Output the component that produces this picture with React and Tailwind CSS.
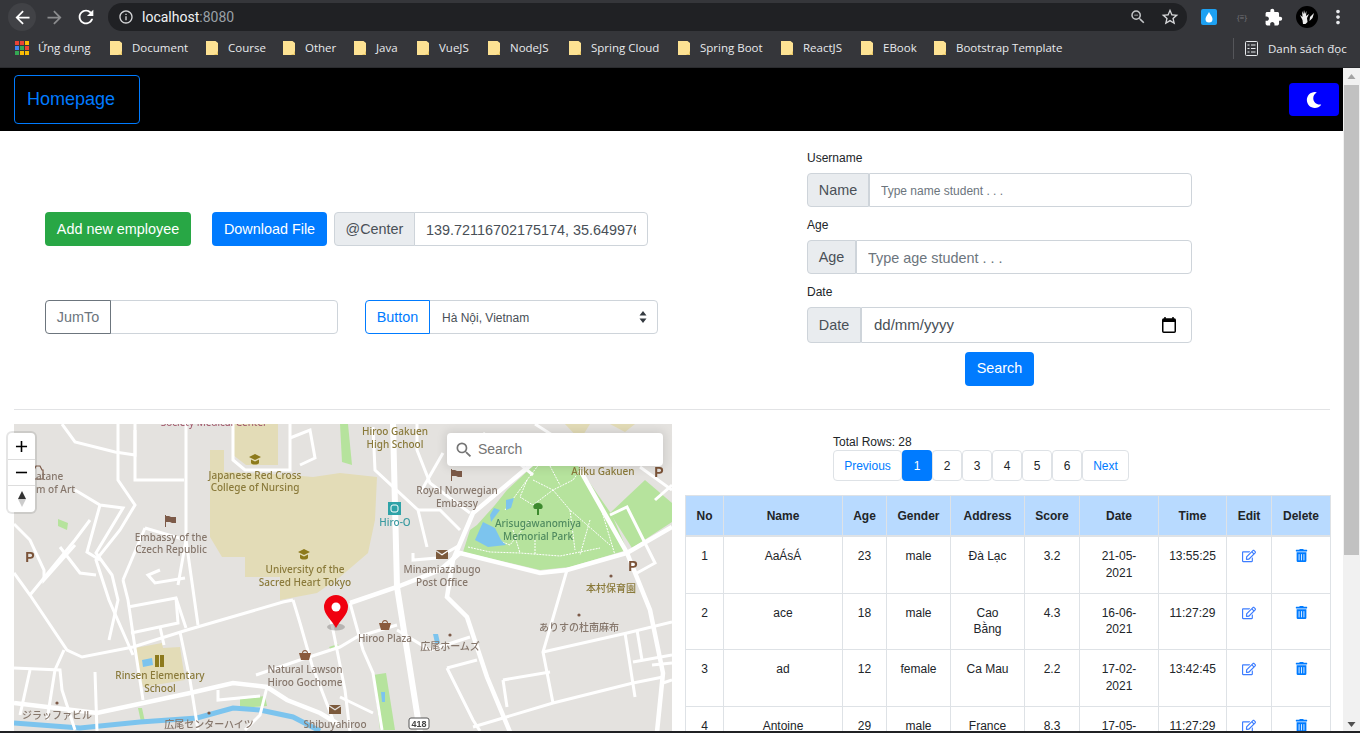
import React from "react";
import { FaMoon, FaRegEdit, FaTrashAlt } from "react-icons/fa";
import { MdArrowBack, MdArrowForward, MdRefresh, MdInfoOutline, MdStarBorder, MdMoreVert, MdSearch, MdZoomOut, MdAdd, MdRemove, MdExtension } from "react-icons/md";

const bookmarks = [
  { t: "Document", w: "w-[56px]" },
  { t: "Course", w: "w-[37px]" },
  { t: "Other", w: "w-[31px]" },
  { t: "Java", w: "w-[23px]" },
  { t: "VueJS", w: "w-[31px]" },
  { t: "NodeJS", w: "w-[41px]" },
  { t: "Spring Cloud", w: "w-[69px]" },
  { t: "Spring Boot", w: "w-[63px]" },
  { t: "ReactJS", w: "w-[40px]" },
  { t: "EBook", w: "w-[33px]" },
  { t: "Bootstrap Template", w: "w-[103px]" },
];

const rows = [
  ["1", "AaÁsÁ", "23", "male", "Đà Lạc", "3.2", "21-05-2021", "13:55:25"],
  ["2", "ace", "18", "male", "Cao Bằng", "4.3", "16-06-2021", "11:27:29"],
  ["3", "ad", "12", "female", "Ca Mau", "2.2", "17-02-2021", "13:42:45"],
  ["4", "Antoine", "29", "male", "France", "8.3", "17-05-2021", "11:27:29"],
];
const heads = ["No", "Name", "Age", "Gender", "Address", "Score", "Date", "Time", "Edit", "Delete"];
const cols = ["w-[38px]", "w-[119px]", "w-[44px]", "w-[64px]", "w-[74px]", "w-[55px]", "w-[79px]", "w-[68px]", "w-[45px]", "w-[59px]"];

function Folder() {
  return (
    <svg width="12" height="14" viewBox="0 0 12 14" className="shrink-0">
      <path d="M0 0h9.500l2.500 2v12H0z" fill="#fde293" />
      <path d="M8.500 13.500h3v-3" fill="none" stroke="#e8c766" strokeWidth="1" />
    </svg>
  );
}

function AppsIcon() {
  return (
    <div className="grid grid-cols-3 gap-[1px] w-[14px] h-[14px] shrink-0">
      <i className="block bg-[#ea4335]" /><i className="block bg-[#ea4335]" /><i className="block bg-[#fbbc04]" />
      <i className="block bg-[#4285f4]" /><i className="block bg-[#34a853]" /><i className="block bg-[#ea4335]" />
      <i className="block bg-[#34a853]" /><i className="block bg-[#fbbc04]" /><i className="block bg-[#fbbc04]" />
    </div>
  );
}

function BrowserChrome() {
  return (
    <div className="h-[68px] shrink-0 bg-[#35363a] text-[#e8eaed] [font-family:'Open_Sans','Noto_Sans',sans-serif]">
      <div className="h-[34px] flex items-center pl-[8px] pr-[10px]">
        <div className="w-[28px] h-[28px] rounded-full bg-[#414246] flex items-center justify-center text-white"><MdArrowBack size={21} /></div>
        <div className="w-[32px] ml-[2px] flex justify-center text-[#8b8c8e]"><MdArrowForward size={21} /></div>
        <div className="w-[32px] flex justify-center text-white"><MdRefresh size={22} /></div>
        <div className="ml-[6px] w-[1079px] h-[28px] rounded-full bg-[#202124] flex items-center pl-[10px] pr-[7px]">
          <MdInfoOutline size={16} className="text-[#d5d6d8]" />
          <span className="ml-[8px] text-[14px] text-[#f1f3f4] [font-family:'Roboto',sans-serif]">localhost<span className="text-[#9aa0a6]">:8080</span></span>
          <MdZoomOut size={18} className="ml-auto text-[#c4c6c8]" />
          <MdStarBorder size={20} className="ml-[13px] text-[#d5d6d8]" />
        </div>
        <div className="ml-[14px] w-[16px] h-[16px] rounded-[2px] bg-[#1da1f2] flex items-center justify-center">
          <svg width="8" height="11" viewBox="0 0 8 11"><path d="M4 0C3 2.500 .5 4.500 .5 7a3.500 3.500 0 0 0 7 0C7.500 4.500 5 2.500 4 0z" fill="#fff" /></svg>
        </div>
        <div className="ml-[17px] w-[16px] text-center text-[8px] text-[#75777a]">{"{≡}"}</div>
        <div className="ml-[14px] text-white"><MdExtension size={19} /></div>
        <div className="ml-[13px] w-[22px] h-[22px] rounded-full bg-black flex items-center justify-center">
          <svg width="16" height="16" viewBox="0 0 16 16"><path d="M3 2l1.500 3L5 1l1 4 1.500-3L7 7l3-2-2 4 .5 4-2 2H4l-.5-4L1 6l2.500 2zM11 8l4-4-1.500 5-3 3z" fill="#eee" /></svg>
        </div>
        <div className="ml-[9px] text-[#e8eaed]"><MdMoreVert size={22} /></div>
      </div>
      <div className="h-[28px] pb-[5px] flex items-center pl-[15px] text-[11.5px] border-b border-[#2a2b2e] box-content">
        <AppsIcon />
        <span className="ml-[9px] w-[53px] whitespace-nowrap">Ứng dụng</span>
        <div className="ml-[19px] flex items-center">
          {bookmarks.map((b) => (
            <div key={b.t} className="flex items-center gap-[10px] mr-[18px]">
              <Folder />
              <span className={b.w + " whitespace-nowrap"}>{b.t}</span>
            </div>
          ))}
        </div>
        <div className="absolute left-[1233px] top-[38px] h-[21px] w-px bg-[#55565a]" />
        <svg width="13" height="15" viewBox="0 0 13 15" className="absolute left-[1245px] top-[41px]" fill="none" stroke="#e8eaed">
          <rect x=".5" y=".5" width="12" height="14" rx="1" />
          <path d="M2.500 4h2M6 4h4.500M2.500 7.500h2M6 7.500h4.500M2.500 11h2M6 11h4.500" />
        </svg>
        <span className="absolute left-[1268px] top-[40px] whitespace-nowrap">Danh sách đọc</span>
      </div>
    </div>
  );
}

const thin = [
  "14,573 30,595 67,650 82,657 133,647 187,630 283,602 293,600",
  "293,600 300,623 312,665 335,725",
  "30,595 75,540 90,520",
  "14,524 30,540 44,570 44,580 75,545",
  "62,424 75,442 115,452 135,455 135,424",
  "118,424 118,480 135,505 120,530 96,560 109,600 133,655",
  "135,430 135,480 184,480",
  "75,490 100,505 123,508 96,553 112,575 118,600 109,640",
  "100,505 87,552 100,560",
  "60,547 80,573 96,575",
  "123,580 128,600 135,648 143,700",
  "128,607 176,598 186,628",
  "131,633 178,623 176,598",
  "160,627 164,645",
  "145,528 186,540 178,585",
  "145,528 123,580",
  "186,424 186,540 198,625",
  "160,570 148,575 155,583 185,578",
  "233,424 233,460 245,470 290,470 290,424",
  "290,438 310,430 315,458 300,465",
  "180,632 190,680 198,730",
  "14,668 60,670 62,690 75,730",
  "30,670 20,715",
  "64,650 55,670 47,720",
  "95,672 97,732",
  "218,690 218,700 260,696",
  "267,687 260,715 245,730",
  "256,675 300,660 340,647 357,637 397,625",
  "330,615 345,690 350,732",
  "350,603 363,650 373,673 382,730",
  "340,697 373,713",
  "373,427 375,470 418,510 427,547",
  "418,510 440,510 460,530",
  "417,424 417,450 430,483 470,513",
  "443,453 420,493",
  "413,553 413,560 437,558 460,545",
  "397,630 430,650 470,637",
  "447,668 477,660",
  "447,668 473,720 480,731",
  "503,680 550,672",
  "503,680 507,707",
  "543,652 627,633 672,622",
  "567,570 543,652 553,703",
  "473,727 553,703 633,683 663,677",
  "625,633 635,697",
  "637,630 642,660",
  "633,662 672,655",
  "663,683 672,680",
  "652,665 672,663",
  "610,515 627,507 655,563 637,573",
  "640,467 672,490",
  "655,500 672,485",
  "483,433 533,475",
  "535,424 560,440",
];
const thick = [
  "14,703 97,713 190,693 233,683 267,687 287,700 320,713 340,725",
  "533,463 473,513 453,560 447,597 467,617 487,677 510,732",
  "580,470 627,553 650,610 663,673 657,732",
  "350,603 397,587 440,570 460,553 540,573 567,570 627,553 672,527",
];
const parkPaths = [
  "477,525 495,505 507,490 533,466 578,466 612,515 627,550 570,567 540,570 463,552 470,530",
  "610,513 645,480 672,503 672,522 632,548",
  "340,424 348,424 352,465 342,462",
];
const parkTrails = [
  "468,547 490,552 520,553 560,556 600,548",
  "505,510 527,480 540,463",
  "533,480 553,490 573,480 580,470",
  "553,490 570,510 610,545",
  "527,480 520,497 533,505 553,490",
  "513,530 520,553",
  "535,540 535,555",
  "570,510 575,550",
  "590,520 580,555",
  "600,505 615,555",
  "497,540 510,545 530,520",
  "550,466 560,485",
];

function Label({ x, y, fill = "#86776c", anchor = "middle", size = 10, children }) {
  return (
    <text x={x} y={y} fill={fill} textAnchor={anchor} fontSize={size} fontWeight="500" className="[font-family:'Noto_Sans','Noto_Sans_CJK_JP',sans-serif]">
      {children}
    </text>
  );
}

function Cap({ x, y }) {
  return <path transform={`translate(${x - 6},${y - 6})`} d="M6 0l6 3-6 3-6-3zM2 5.500l4 2 4-2V9c-1 2-7 2-8 0z" fill="#8d7a1c" />;
}
function Flag({ x, y }) {
  return <path transform={`translate(${x - 5},${y - 6})`} d="M0 0h1v12H0zM1 1h3l2 1h5v6H7L5 7H1z" fill="#7c5a48" />;
}
function Basket({ x, y }) {
  return <path transform={`translate(${x - 6},${y - 6})`} d="M3 4C3 0 9 0 9 4H8C8 1.500 4 1.500 4 4zM0 4h12l-2 7H2z" fill="#8a5a3c" />;
}
function Post({ x, y }) {
  return <path transform={`translate(${x - 6},${y - 5})`} d="M0 0h12L6 4zM0 1.500l6 4 6-4V9H0z" fill="#7c5a3c" />;
}
function P({ x, y }) {
  return <text x={x} y={y} fill="#7b5338" fontSize="14" fontWeight="700" textAnchor="middle" className="[font-family:'Liberation_Sans',sans-serif]">P</text>;
}
function Dot({ x, y }) {
  return <circle cx={x} cy={y} r="1.600" fill="#7c5a48" />;
}

function MapView() {
  return (
    <div className="relative w-[658px] h-[307px] shrink-0 bg-[#e4e2df]">
      <svg viewBox="14 424 658 307" width="658" height="307" className="block absolute left-0 top-0 blur-[0.3px]">
        <polygon points="233,424 278,424 278,465 246,465 233,455" fill="#e3dcb7" />
        <polygon points="210,450 224,450 224,472 290,475 313,477 340,473 377,477 375,520 368,553 340,577 317,593 280,600 280,577 245,577 245,557 222,557 210,537" fill="#e3dcb7" />
        <polygon points="135,648 162,643 163,648 180,647 185,680 143,687" fill="#e3dcb7" />
        <polygon points="565,424 590,424 580,440" fill="#e3dcb7" />
        <polygon points="610,424 635,424 625,432" fill="#e3dcb7" />
        {parkPaths.map((p, i) => <polygon key={i} points={p} fill="#b6e39d" />)}
        <polygon points="373,675 386,673 395,730 380,730" fill="#b6e39d" />
        <polygon points="58,519 68,523 67,530 58,526" fill="#b6e39d" />
        <polygon points="240,699 265,696 267,706 240,708" fill="#b6e39d" />
        <polygon points="138,708 142,708 145,722 141,722" fill="#b6e39d" />
        <polygon points="329,647 338,644 339,648 331,650" fill="#b6e39d" />
        <polygon points="142,660 152,658 153,665 143,667" fill="#7cc4ee" />
        <polygon points="433,634 438,634 440,643 435,643" fill="#7cc4ee" />
        <polygon points="381,692 385,692 385,702 382,702" fill="#7cc4ee" />
        <polyline points="14,723 80,728 140,722 197,718 233,708 260,710 293,717 320,731" fill="none" stroke="#7cc4ee" strokeWidth="5" />
        {parkTrails.map((p, i) => <polyline key={i} points={p} fill="none" stroke="#ffffff" strokeWidth="1" strokeDasharray="2 1" />)}
        <polygon points="483,522 495,528 501,540 506,545 488,547 475,540" fill="#7cc4ee" />
        <polygon points="490,515 494,508 500,510 491,522" fill="#7cc4ee" />
        <polygon points="506,500 514,498 511,508 506,510" fill="#7cc4ee" />
        {thin.map((p, i) => <polyline key={i} points={p} fill="none" stroke="#ffffff" strokeWidth="3" />)}
        {thick.map((p, i) => <polyline key={i} points={p} fill="none" stroke="#ffffff" strokeWidth="4.500" />)}
        <polyline points="393,424 397,587 420,732" fill="none" stroke="#ffffff" strokeWidth="6" />

        <text x="214" y="426" fill="#a05468" fontSize="10" textAnchor="middle" className="[font-family:'Noto_Sans',sans-serif]">Society Medical Center</text>
        <Cap x={255} y={460} /><Cap x={304} y={555} />
        <Flag x={170} y={521} /><Flag x={456} y={475} />
        <Basket x={305} y={655} /><Basket x={385} y={625} />
        <Post x={442} y={555} /><Post x={335} y={710} />
        <P x={30} y={562} /><P x={659} y={477} /><P x={633} y={571} />
        <Dot x={57} y={703} /><Dot x={209} y={713} /><Dot x={450} y={635} /><Dot x={611} y={576} /><Dot x={579} y={615} />
        <path d="M34 470l2-4h4l2 4h1v9H33v-9z" fill="none" stroke="#7c5a48" strokeWidth="1.200" />
        <rect x="155" y="655" width="4" height="12" fill="#8d7a1c" /><rect x="160" y="655" width="4" height="12" fill="#8d7a1c" />
        <rect x="388" y="502" width="13" height="13" fill="#2fa3a8" />
        <rect x="391" y="505" width="7" height="7" rx="2" fill="none" stroke="#fff" />
        <path d="M538 503c-5 0-6 5-3 6h2v6h2v-6h2c3-1 2-6-3-6z" fill="#3d8a2e" />
        <rect x="409" y="718" width="20" height="11" rx="2" fill="#fff" stroke="#555" />
        <text x="419" y="727" fontSize="9" fontWeight="700" fill="#444" textAnchor="middle" className="[font-family:'Liberation_Sans',sans-serif]">418</text>

        <Label x={255} y={479} fill="#8a7a3a">Japanese Red Cross</Label>
        <Label x={255} y={491} fill="#8a7a3a">College of Nursing</Label>
        <Label x={171} y={541}>Embassy of the</Label>
        <Label x={171} y={553}>Czech Republic</Label>
        <Label x={305} y={573} fill="#8a7a3a">University of the</Label>
        <Label x={305} y={586} fill="#8a7a3a">Sacred Heart Tokyo</Label>
        <Label x={36} y={480} anchor="start">atane</Label>
        <Label x={36} y={493} anchor="start">m of Art</Label>
        <Label x={160} y={679} fill="#8a7a3a">Rinsen Elementary</Label>
        <Label x={160} y={692} fill="#8a7a3a">School</Label>
        <Label x={305} y={673}>Natural Lawson</Label>
        <Label x={305} y={686}>Hiroo Gochome</Label>
        <Label x={335} y={728}>Shibuyahiroo</Label>
        <Label x={57} y={719}>ジラッファビル</Label>
        <Label x={209} y={728}>広尾センターハイツ</Label>
        <Label x={395} y={435} fill="#8a7a3a">Hiroo Gakuen</Label>
        <Label x={395} y={448} fill="#8a7a3a">High School</Label>
        <Label x={457} y={494}>Royal Norwegian</Label>
        <Label x={457} y={507}>Embassy</Label>
        <Label x={395} y={526} fill="#3a9aa0">Hiro-O</Label>
        <Label x={442} y={573}>Minamiazabugo</Label>
        <Label x={442} y={586}>Post Office</Label>
        <Label x={385} y={642}>Hiroo Plaza</Label>
        <Label x={450} y={650}>広尾ホームズ</Label>
        <Label x={603} y={475} fill="#8a7a3a">Aiiku Gakuen</Label>
        <Label x={538} y={527} fill="#4f8a5f">Arisugawanomiya</Label>
        <Label x={538} y={540} fill="#4f8a5f">Memorial Park</Label>
        <Label x={611} y={592} fill="#8a7a3a">本村保育園</Label>
        <Label x={579} y={631}>ありすの杜南麻布</Label>

        <ellipse cx="336" cy="627" rx="9" ry="3.500" fill="#000" opacity="0.2" />
        <path d="M336 628c-4-8-12-13-12-21a12 12 0 0 1 24 0c0 8-8 13-12 21z" fill="#f0000f" />
        <circle cx="336" cy="607" r="4.500" fill="#fff" />
      </svg>

      <div className="absolute left-[-6px] top-[9px] w-[27px] h-[79px] bg-white rounded-[4px] shadow-[0_0_0_2px_rgba(0,0,0,0.1)] flex flex-col items-center text-[#333]">
        <div className="h-[27px] flex items-center justify-center border-b border-[#ddd] w-full"><MdAdd size={19} className="text-black" /></div>
        <div className="h-[26px] flex items-center justify-center border-b border-[#ddd] w-full"><MdRemove size={19} className="text-black" /></div>
        <div className="h-[26px] flex items-center justify-center">
          <svg width="10" height="18" viewBox="0 0 10 18"><path d="M5 1l4 8H1z" fill="#333" /><path d="M5 17l4-8H1z" fill="#ccc" /></svg>
        </div>
      </div>

      <div className="absolute left-[433px] top-[9px] w-[216px] h-[33px] bg-white rounded-[4px] shadow-[0_0_10px_2px_rgba(0,0,0,0.1)] flex items-center pl-[7px] text-[14px] text-[#757575]">
        <MdSearch size={20} className="text-[#757575]" />
        <span className="ml-[4px]">Search</span>
      </div>
    </div>
  );
}

function Addon({ children, className = "" }) {
  return <div className={"flex items-center justify-center pt-[1px] bg-[#e9ecef] border border-[#ced4da] rounded-l-[4px] text-[14.4px] text-[#495057] shrink-0 " + className}>{children}</div>;
}

function TextInput({ placeholder, className = "", value, readOnly }) {
  return (
    <input
      placeholder={placeholder}
      defaultValue={value}
      readOnly={readOnly}
      className={"min-w-0 flex-1 h-full px-[11px] pt-[1px] bg-white border border-[#ced4da] rounded-r-[4px] text-[#495057] placeholder:text-[#6c757d] outline-none " + className}
    />
  );
}

function TopSection() {
  return (
    <div className="h-[279px] flex border-b border-[#e2e3e5] text-[14.4px]">
      <div className="w-[793px] shrink-0 pl-[31px] pt-[81px]">
        <div className="flex items-center h-[34px]">
          <button className="h-[34px] w-[146px] pt-[1px] bg-[#28a745] text-white rounded-[4px]">Add new employee</button>
          <button className="ml-[21px] h-[34px] w-[115px] pt-[1px] bg-[#007bff] text-white rounded-[4px]">Download File</button>
          <div className="ml-[7px] w-[314px] h-[34px] flex">
            <Addon className="w-[81px]">@Center</Addon>
            <TextInput value="139.72116702175174, 35.64997621" readOnly className="ml-[-1px]" />
          </div>
        </div>
        <div className="flex mt-[54px] h-[34px]">
          <div className="w-[293px] flex">
            <div className="w-[66px] pt-[1px] flex items-center justify-center border border-[#6c757d] rounded-l-[4px] text-[#6c757d] relative z-10">JumTo</div>
            <TextInput className="ml-[-1px]" />
          </div>
          <div className="ml-[27px] w-[293px] flex">
            <div className="w-[65px] pt-[1px] flex items-center justify-center border border-[#007bff] rounded-l-[4px] text-[#007bff] relative z-10">Button</div>
            <div className="relative flex-1 ml-[-1px]">
              <select className="appearance-none w-full h-full pl-[12px] pr-[24px] pt-[1px] text-[12px] bg-white border border-[#ced4da] rounded-r-[4px] text-[#495057] outline-none">
                <option>Hà Nội, Vietnam</option>
              </select>
              <svg width="8" height="12" viewBox="0 0 8 12" className="absolute right-[11px] top-[11px]"><path d="M4 0l3.500 4.500h-7zM4 12L.5 7.500h7z" fill="#343a40" /></svg>
            </div>
          </div>
        </div>
      </div>
      <div className="w-[385px] shrink-0 pt-[19px] text-[#212529]">
        <div className="text-[12px] h-[17px] leading-[17px] mb-[6px]">Username</div>
        <div className="flex h-[34px]">
          <Addon className="w-[62px]">Name</Addon>
          <TextInput placeholder="Type name student . . ." className="text-[12px]" />
        </div>
        <div className="text-[12px] h-[17px] leading-[17px] mt-[10px] mb-[6px]">Age</div>
        <div className="flex h-[34px]">
          <Addon className="w-[49px]">Age</Addon>
          <TextInput placeholder="Type age student . . ." />
        </div>
        <div className="text-[12px] h-[17px] leading-[17px] mt-[10px] mb-[6px]">Date</div>
        <div className="flex h-[36px]">
          <Addon className="w-[54px]">Date</Addon>
          <div className="flex-1 flex items-center justify-between pl-[12px] pr-[15px] border border-[#ced4da] rounded-r-[4px] text-[#495057] text-[15px]">
            <span>dd/mm/yyyy</span>
            <svg width="14" height="16" viewBox="0 0 14 16"><path d="M3 0v2M11 0v2" stroke="#000" strokeWidth="1.500" /><rect x=".75" y="2" width="12.500" height="13.250" rx="1" fill="none" stroke="#000" strokeWidth="1.500" /><rect x="1" y="2" width="12" height="3" fill="#000" /></svg>
          </div>
        </div>
        <div className="flex justify-center mt-[9px]">
          <button className="w-[69px] h-[34px] bg-[#007bff] text-white rounded-[4px]">Search</button>
        </div>
      </div>
    </div>
  );
}

function Pagination() {
  const cell = "h-[31px] flex items-center justify-center border border-[#dee2e6] rounded-[4px] bg-white";
  return (
    <div className="flex text-[12px] ml-[148px] text-[#212529]">
      <div className={cell + " w-[69px] text-[#007bff]"}>Previous</div>
      <div className="h-[31px] w-[30px] flex items-center justify-center bg-[#007bff] text-white rounded-[4px]">1</div>
      {["2", "3", "4", "5", "6"].map((n) => <div key={n} className={cell + " w-[30px]"}>{n}</div>)}
      <div className={cell + " w-[47px] text-[#007bff]"}>Next</div>
    </div>
  );
}

function DataTable() {
  return (
    <table className="table-fixed w-[645px] border-collapse text-[12px] leading-[16.8px] text-[#212529] text-center">
      <colgroup>{cols.map((c, i) => <col key={i} className={c} />)}</colgroup>
      <thead>
        <tr className="bg-[#b8daff]">
          {heads.map((h) => <th key={h} className="px-0 pt-[12px] pb-[10px] border border-[#dee2e6] border-b-2 font-bold">{h}</th>)}
        </tr>
      </thead>
      <tbody>
        {rows.map((r) => (
          <tr key={r[0]}>
            {r.map((c, i) => <td key={i} className="px-[10px] py-[11.100px] align-top border border-[#dee2e6]">{c}</td>)}
            <td className="px-0 py-[11.100px] align-top border border-[#dee2e6]"><FaRegEdit size={14} className="inline-block text-[#3d7dff] align-top mt-[1px]" /></td>
            <td className="px-0 py-[11.100px] align-top border border-[#dee2e6]"><FaTrashAlt size={13} className="inline-block text-[#007bff] align-top mt-[1px]" /></td>
          </tr>
        ))}
      </tbody>
    </table>
  );
}

function Scrollbar() {
  return (
    <div className="w-[17px] shrink-0 bg-[#f1f1f1] flex flex-col items-center">
      <div className="h-[17px] flex items-center justify-center"><svg width="9" height="5" viewBox="0 0 9 5"><path d="M4.500 0l4 5h-8z" fill="#a3a3a3" /></svg></div>
      <div className="w-[15px] h-[470px] bg-[#c1c1c1]" />
      <div className="mt-auto h-[14px] flex items-center justify-center"><svg width="9" height="5" viewBox="0 0 9 5"><path d="M4.500 5l4-5h-8z" fill="#505050" /></svg></div>
    </div>
  );
}

export default function App() {
  return (
    <div className="relative w-[1360px] h-[733px] overflow-hidden bg-white flex flex-col [font-family:'Liberation_Sans',Arial,sans-serif]">
      <BrowserChrome />
      <div className="flex-1 min-h-0 flex">
        <div className="w-[1343px] shrink-0 overflow-hidden">
          <div className="h-[63px] bg-black flex items-center justify-between pl-[14px] pr-[4px]">
            <div className="w-[126px] h-[49px] mt-[-1px] pt-[1px] flex items-center pl-[12px] border border-[#007bff] rounded-[4px] text-[#007bff] text-[18px]">Homepage</div>
            <button className="w-[50px] h-[33px] bg-[#0000ff] rounded-[4px] flex items-center justify-center text-white"><FaMoon size={16} /></button>
          </div>
          <div className="pl-[14px] pr-[13px]">
            <TopSection />
            <div className="flex mt-[14px]">
              <MapView />
              <div className="ml-[13px] w-[645px] pt-[10px]">
                <div className="ml-[148px] text-[12px] leading-[16px] text-[#212529]">Total Rows: 28</div>
                <Pagination />
                <div className="mt-[14px]"><DataTable /></div>
              </div>
            </div>
          </div>
        </div>
        <Scrollbar />
      </div>
      <div className="h-[2px] shrink-0 bg-[#202124]" />
    </div>
  );
}
